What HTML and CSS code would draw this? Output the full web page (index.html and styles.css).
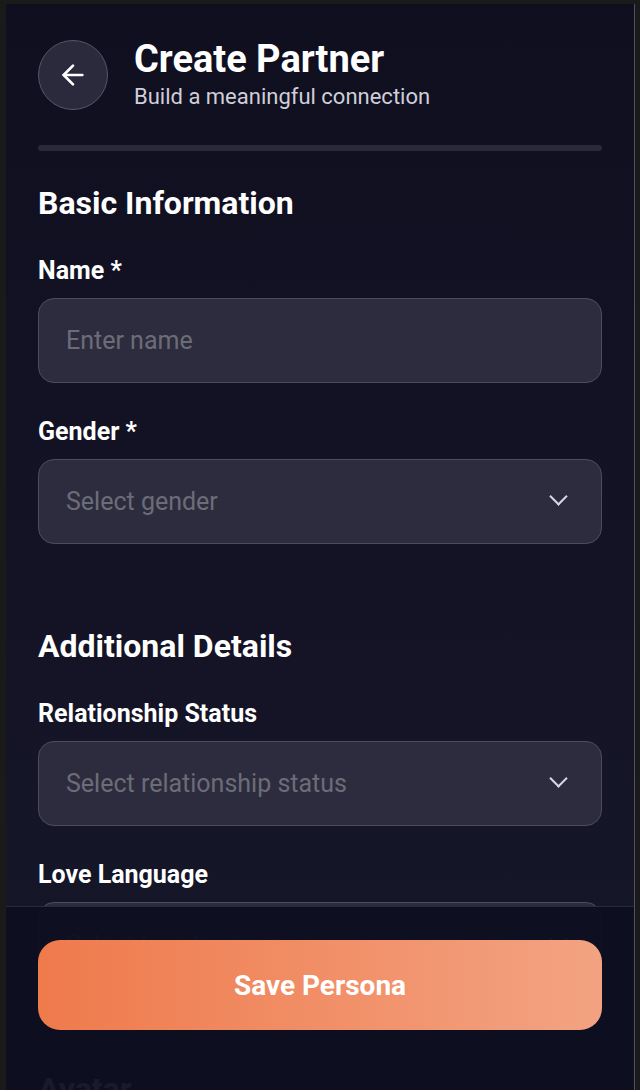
FILE: index.html
```html
<!DOCTYPE html>
<html>

<head>
    <title>Create Partner</title>
    <link rel="stylesheet" href="styles.css">
</head>

<body>
    <div class="app">
        <!-- Header -->
        <div class="header">
            <button class="back-button" onclick="history.back()">
                <svg width="32" height="32" viewBox="0 0 24 24" fill="none" stroke="#fff" stroke-width="2" stroke-linecap="round" stroke-linejoin="round">
                    <path d="M19 12H5"></path>
                    <path d="M12 19l-7-7 7-7"></path>
                </svg>
            </button>
            <div class="header-text">
                <h1>Create Partner</h1>
                <p>Build a meaningful connection</p>
            </div>
        </div>
        <div class="progress"></div>

        <form id="partner-form" onsubmit="event.preventDefault();">
            <div class="section">
                <h2>Basic Information</h2>
                <label for="name">Name *</label>
                <input type="text" id="name" placeholder="Enter name">
                <label for="gender">Gender *</label>
                <div class="select-box">
                    <select id="gender">
                        <option value="">Select gender</option>
                        <option value="Male">Male</option>
                        <option value="Female">Female</option>
                        <option value="Other">Other</option>
                    </select>
                </div>
            </div>

            <div class="section">
                <h2>Additional Details</h2>
                <label for="relationship">Relationship Status</label>
                <div class="select-box">
                    <select id="relationship">
                        <option value="">Select relationship status</option>
                        <option value="Single">Single</option>
                        <option value="Dating">Dating</option>
                    </select>
                </div>
                <label for="love-language">Love Language</label>
                <div class="select-box">
                    <select id="love-language">
                        <option value="">Select love language</option>
                        <option value="Words">Words of Affirmation</option>
                        <option value="Time">Quality Time</option>
                    </select>
                </div>
            </div>

            <div class="section">
                <h2>Avatar</h2>
            </div>
        </form>

        <!-- Save bar stays at the bottom -->
        <div class="save-bar">
            <button type="submit" form="partner-form" class="save-button">Save Persona</button>
        </div>
    </div>
</body>
</html>
```

FILE: styles.css
```css
/* Page frame */
body {
    margin: 0;
    padding: 0;
    background-color: #1a1a1a;
    font-family: Roboto, "Liberation Sans", Arial, sans-serif;
    color: #fff;
    overflow: hidden;
}

.app {
    margin: 4px 5px 0 6px;
    height: 1086px;
    overflow: hidden;
    padding: 35px 32px 0 32px;
    background: linear-gradient(180deg, #0f0f20 0%, #17172a 100%);
    border-right: 1px solid #505064;
    box-sizing: border-box;
}

/* Header */
.header {
    display: flex;
    align-items: center;
    gap: 26px;
}

.back-button {
    width: 70px;
    height: 70px;
    flex-shrink: 0;
    border-radius: 50%;
    background-color: #2a2a3c;
    border: 1px solid #56566a;
    display: flex;
    align-items: center;
    justify-content: center;
    padding: 0;
    cursor: pointer;
}

.header-text h1 {
    margin: 0;
    font-size: 38px;
    font-weight: 700;
    line-height: 40px;
}

.header-text p {
    margin: 5px 0 0 0;
    font-size: 22px;
    line-height: 26px;
    color: #cfcfd8;
}

.progress {
    height: 6px;
    margin-top: 35px;
    border-radius: 3px;
    background-color: #29293a;
}

/* Form sections */
#partner-form {
    display: flex;
    flex-direction: column;
    gap: 50px;
}

h2 {
    margin: 33px 0 0 0;
    font-size: 32px;
    font-weight: 700;
    line-height: 38px;
}

label {
    display: block;
    margin: 34px 0 12px 0;
    font-size: 25px;
    line-height: 30px;
    font-weight: 700;
}

input[type="text"],
select {
    width: 100%;
    height: 85px;
    padding: 0 27px;
    margin-bottom: 0;
    font-family: inherit;
    font-size: 25px;
    color: #fff;
    background-color: #2d2c3e;
    border: 1px solid #4c4c5e;
    border-radius: 16px;
    box-sizing: border-box;
    outline: none;
}

input::placeholder {
    color: #6c6c78;
}

select {
    appearance: none;
    color: #6c6c78;
}

.select-box {
    position: relative;
}

.select-box::after {
    content: "";
    position: absolute;
    right: 37px;
    top: 31px;
    width: 11px;
    height: 11px;
    border-right: 2px solid #d8d8e0;
    border-bottom: 2px solid #d8d8e0;
    transform: rotate(45deg);
    pointer-events: none;
}

/* Save bar */
.save-bar {
    position: fixed;
    left: 6px;
    right: 6px;
    bottom: 0;
    height: 184px;
    padding: 33px 32px 0 32px;
    box-sizing: border-box;
    background-color: rgba(13, 14, 32, 0.95);
    border-top: 1px solid #2a2a3e;
}

.save-button {
    width: 100%;
    height: 90px;
    border: none;
    border-radius: 22px;
    background: linear-gradient(90deg, #ef7a4c 0%, #f3a382 100%);
    color: #fff;
    font-family: inherit;
    font-size: 28px;
    font-weight: 700;
    cursor: pointer;
}
```
